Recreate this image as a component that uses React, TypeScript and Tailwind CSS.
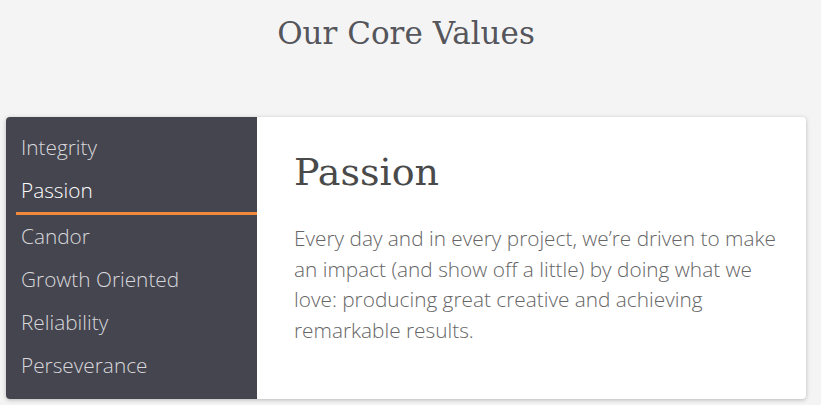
const values = [
  "Integrity",
  "Passion",
  "Candor",
  "Growth Oriented",
  "Reliability",
  "Perseverance",
];

export default function App() {
  const active = "Passion";
  return (
    <div className="min-h-[405px] w-full bg-[#f4f4f4] pt-[11px] font-['Open_Sans',sans-serif]">
      <div className="mx-[6px] w-[800px]">
        <h1 className="text-center font-['DejaVu_Serif',serif] text-[31px] font-light leading-[44px] text-[#55555c]">
          Our Core Values
        </h1>
        <div className="mt-[62px] flex h-[282px] overflow-hidden rounded-[4px] bg-white shadow-[0_1px_4px_rgba(0,0,0,0.25)]">
          <ul className="w-[251px] shrink-0 bg-[#45454f] pl-[10px] pt-[9px]">
            {values.map((v) => (
              <li
                key={v}
                className={
                  v === active
                    ? "border-b-[3px] border-[#f08a3a] pl-[5px] text-[20.8px] font-light leading-[43px] text-white"
                    : "pl-[5px] text-[20.8px] font-light leading-[43px] text-[#d8d8dc]"
                }
              >
                {v}
              </li>
            ))}
          </ul>
          <div className="flex-1 pl-[37px] pr-[18px] pt-[31px]">
            <h2 className="font-['DejaVu_Serif',serif] text-[38px] font-light leading-[48px] text-[#4a4a4a]">
              Passion
            </h2>
            <p className="mt-[27px] text-[20.8px] font-light leading-[30.5px] text-[#666]">
              Every day and in every project, we’re driven to make an impact
              (and show off a little) by doing what we love: producing great
              creative and achieving remarkable results.
            </p>
          </div>
        </div>
      </div>
    </div>
  );
}
